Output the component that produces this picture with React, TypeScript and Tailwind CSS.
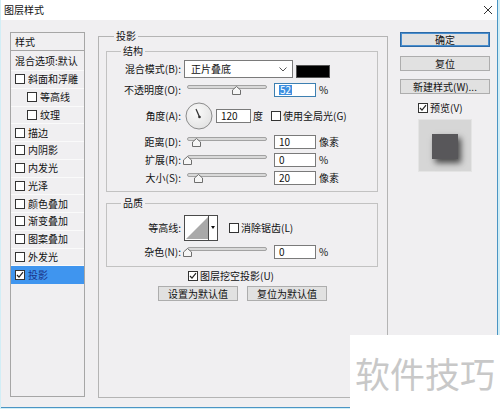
import React from "react";

function Box({ checked }: { checked?: boolean }) {
  return (
    <span className="w-[10px] h-[10px] border border-[#333333] bg-white flex items-center justify-center shrink-0">
      {checked && (
        <svg width="8" height="8" viewBox="0 0 8 8">
          <path d="M1 4 L3 6.2 L7 1.2" fill="none" stroke="#222222" strokeWidth="1.2" />
        </svg>
      )}
    </span>
  );
}

function Slider({ pos }: { pos: number }) {
  return (
    <div className="relative w-[80px] h-[10px] ml-[6px] shrink-0">
      <div className="w-[80px] h-[4px] rounded-[2px] border border-[#a2a2a2] bg-[#d9d9d9]" />
      <svg
        width="9"
        height="9"
        viewBox="0 0 9 9"
        className="absolute top-[1px]"
        style={{ left: pos - 4.5 }}
      >
        <polygon points="4.5,0.5 8.5,4 8.5,8.5 0.5,8.5 0.5,4" fill="#f6f6f6" stroke="#6e6e6e" strokeWidth="1" />
      </svg>
    </div>
  );
}

function Input({ value, focus }: { value: string; focus?: boolean }) {
  return (
    <div
      className={
        "ml-[7px] w-[42px] h-[14px] bg-white border flex items-center pl-[4px] leading-none shrink-0 " +
        (focus ? "border-[#3c7fb1]" : "border-[#7a7a7a]")
      }
    >
      {focus ? <span className="bg-[#3d8fe0] text-white px-[1px]">{value}</span> : <span>{value}</span>}
    </div>
  );
}

function Label({ children }: { children: React.ReactNode }) {
  return <span className="w-[74px] text-right shrink-0 leading-none">{children}</span>;
}

function Btn({ children, def, w }: { children: React.ReactNode; def?: boolean; w?: string }) {
  return (
    <div
      className={
        "h-[15px] bg-[#e1e1e1] border flex items-center justify-center leading-none " +
        (w ?? "w-[90px]") +
        " " +
        (def ? "border-[#2c6aa6] shadow-[inset_0_0_0_1px_#4a8fcf]" : "border-[#adadad]")
      }
    >
      {children}
    </div>
  );
}

const items: { t: string; sub?: boolean; sel?: boolean }[] = [
  { t: "斜面和浮雕" },
  { t: "等高线", sub: true },
  { t: "纹理", sub: true },
  { t: "描边" },
  { t: "内阴影" },
  { t: "内发光" },
  { t: "光泽" },
  { t: "颜色叠加" },
  { t: "渐变叠加" },
  { t: "图案叠加" },
  { t: "外发光" },
  { t: "投影", sel: true },
];

export default function App() {
  return (
    <div className="relative w-[500px] h-[409px] overflow-hidden bg-[#d2eef6] text-[10px] text-[#111111] font-['Noto_Sans_CJK_SC',sans-serif]">
      <div className="ml-[1px] w-[497px] h-[408px] flex flex-col bg-[#f0eff1] border-r border-b border-[#4b95c4]">
        {/* title bar */}
        <div className="h-[20px] bg-white flex items-center justify-between pl-[3px] pr-[4px] shrink-0">
          <span className="leading-none">图层样式</span>
          <svg width="10" height="10" viewBox="0 0 10 10">
            <path d="M1 1 L9 9 M9 1 L1 9" stroke="#333333" strokeWidth="1" />
          </svg>
        </div>

        <div className="flex items-start">
          {/* left list */}
          <div className="ml-[9px] mt-[12px] w-[75px] h-[365px] border border-[#a6a6a6] overflow-hidden shrink-0">
            <div className="h-[18px] border-b border-[#a6a6a6] flex items-center pl-[4px] leading-none">样式</div>
            <div className="h-[20px] flex items-center pl-[4px] leading-none whitespace-nowrap border-b border-[#fafafa]">
              混合选项:默认
            </div>
            {items.map((it) => (
              <div
                key={it.t}
                className={
                  "h-[17.75px] flex items-center gap-[3px] whitespace-nowrap leading-none border-b " +
                  (it.sub ? "pl-[16px] " : "pl-[4px] ") +
                  (it.sel ? "bg-[#3f95ef] text-[#1b3488] border-[#3f95ef]" : "border-[#fafafa]")
                }
              >
                <Box checked={it.sel} />
                <span>{it.t}</span>
              </div>
            ))}
          </div>

          {/* main group */}
          <fieldset className="ml-[13px] mt-[9px] w-[290px] h-[369px] border border-[#b4b4b4] px-[7px] shrink-0">
            <legend className="ml-[8px] px-[2px] leading-[14px]">投影</legend>

            <fieldset className="mt-[1px] w-[272px] border border-[#c2c2c2] pb-[6px]">
              <legend className="ml-[14px] px-[2px] leading-[14px]">结构</legend>

              <div className="mt-[2px] h-[18px] flex items-center">
                <Label>混合模式(B):</Label>
                <div className="ml-[3px] w-[109px] h-[18px] bg-white border border-[#7a7a7a] flex items-center justify-between pl-[6px] pr-[5px] leading-none">
                  <span>正片叠底</span>
                  <svg width="8" height="5" viewBox="0 0 8 5">
                    <path d="M0.5 0.5 L4 4 L7.5 0.5" fill="none" stroke="#555555" strokeWidth="1" />
                  </svg>
                </div>
                <div className="ml-[3px] w-[34px] h-[13px] bg-black border border-[#555555] self-end" />
              </div>

              <div className="mt-[4px] h-[15px] flex items-center">
                <Label>不透明度(O):</Label>
                <Slider pos={49} />
                <Input value="52" focus />
                <span className="ml-[3px] leading-none">%</span>
              </div>

              <div className="mt-[4px] h-[29px] flex items-center">
                <Label>角度(A):</Label>
                <svg width="28" height="28" viewBox="0 0 28 28" className="ml-[4px] shrink-0">
                  <defs>
                    <radialGradient id="dg" cx="0.4" cy="0.35" r="0.7">
                      <stop offset="0" stopColor="#fbfbfb" />
                      <stop offset="1" stopColor="#e2e2e2" />
                    </radialGradient>
                  </defs>
                  <circle cx="14" cy="14" r="13" fill="url(#dg)" stroke="#8c8c8c" strokeWidth="1" />
                  <line x1="14.5" y1="15" x2="11" y2="7" stroke="#333333" strokeWidth="1.2" />
                  <circle cx="14.5" cy="15" r="1.3" fill="#333333" />
                </svg>
                <div className="ml-[3px] w-[35px] h-[14px] bg-white border border-[#7a7a7a] flex items-center pl-[4px] leading-none">
                  120
                </div>
                <span className="ml-[2px] leading-none">度</span>
                <span className="ml-[8px]">
                  <Box />
                </span>
                <span className="ml-[2px] leading-none whitespace-nowrap">使用全局光(G)</span>
              </div>

              <div className="mt-[5px] h-[14px] flex items-center">
                <Label>距离(D):</Label>
                <Slider pos={9} />
                <Input value="10" />
                <span className="ml-[3px] leading-none">像素</span>
              </div>

              <div className="mt-[4px] h-[14px] flex items-center">
                <Label>扩展(R):</Label>
                <Slider pos={0.5} />
                <Input value="0" />
                <span className="ml-[3px] leading-none">%</span>
              </div>

              <div className="mt-[4px] h-[14px] flex items-center">
                <Label>大小(S):</Label>
                <Slider pos={11} />
                <Input value="20" />
                <span className="ml-[3px] leading-none">像素</span>
              </div>
            </fieldset>

            <fieldset className="mt-[4px] w-[272px] border border-[#c2c2c2] pb-[7px]">
              <legend className="ml-[14px] px-[2px] leading-[14px]">品质</legend>

              <div className="mt-[5px] h-[26px] flex items-center">
                <Label>等高线:</Label>
                <svg width="34" height="26" viewBox="0 0 34 26" className="ml-[3px] shrink-0">
                  <rect x="0.5" y="0.5" width="33" height="25" fill="#ffffff" stroke="#4a4a4a" />
                  <polygon points="2,24 24,2 24,24" fill="#a9a9a9" />
                  <line x1="24.5" y1="1" x2="24.5" y2="25" stroke="#4a4a4a" />
                  <polygon points="27,11 31,11 29,14" fill="#111111" />
                </svg>
                <span className="ml-[11px]">
                  <Box />
                </span>
                <span className="ml-[2px] leading-none whitespace-nowrap">消除锯齿(L)</span>
              </div>

              <div className="mt-[4px] h-[14px] flex items-center">
                <Label>杂色(N):</Label>
                <Slider pos={0.5} />
                <Input value="0" />
                <span className="ml-[3px] leading-none">%</span>
              </div>
            </fieldset>

            <div className="mt-[3px] h-[12px] flex items-center ml-[82px]">
              <Box checked />
              <span className="ml-[2px] leading-none whitespace-nowrap">图层挖空投影(U)</span>
            </div>

            <div className="mt-[4px] flex ml-[52px] gap-[9px]">
              <Btn w="w-[80px]">设置为默认值</Btn>
              <Btn w="w-[80px]">复位为默认值</Btn>
            </div>
          </fieldset>

          {/* right column */}
          <div className="ml-[12px] mt-[12px] w-[90px] flex flex-col shrink-0">
            <Btn def>确定</Btn>
            <div className="mt-[9px]">
              <Btn>复位</Btn>
            </div>
            <div className="mt-[8px]">
              <Btn>新建样式(W)...</Btn>
            </div>
            <div className="mt-[8px] h-[12px] flex items-center ml-[18px]">
              <Box checked />
              <span className="ml-[2px] leading-none">预览(V)</span>
            </div>
            <div className="mt-[5px] ml-[18px] w-[54px] h-[53px] bg-[#d6d6d6] border border-[#e4e4e4] pt-[14px] pl-[13px]">
              <div className="w-[26px] h-[25px] bg-[#58575a] shadow-[3px_4px_6px_rgba(0,0,0,0.65)]" />
            </div>
          </div>
        </div>
      </div>

      {/* watermark */}
      <div className="absolute left-[350px] top-[335px] w-[150px] h-[74px] bg-white flex items-center pl-[5px]">
        <span className="text-[35px] leading-none text-[#c8c8c8] whitespace-nowrap">软件技巧</span>
      </div>
    </div>
  );
}
